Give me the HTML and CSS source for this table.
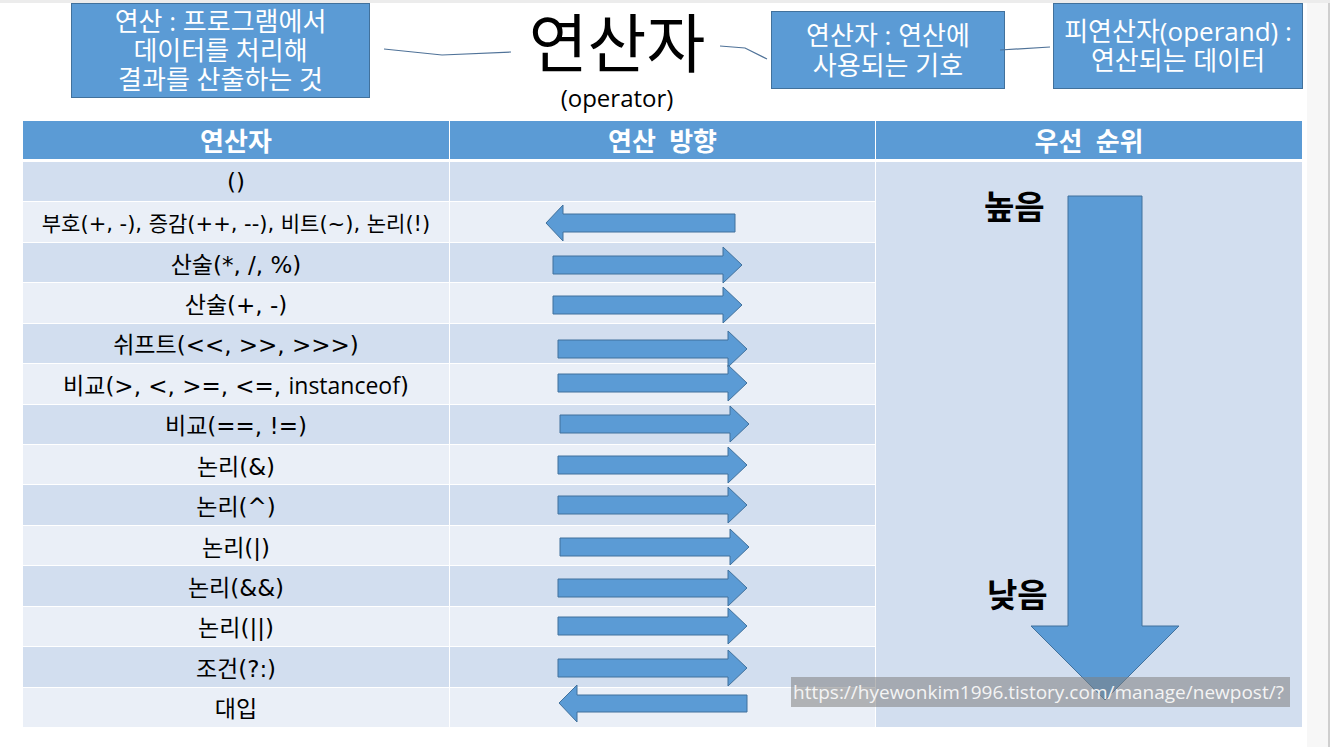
FILE: index.html
```html
<!DOCTYPE html>
<html lang="ko">
<head>
<meta charset="utf-8">
<title>연산자</title>
<link rel="stylesheet" href="styles.css">
</head>
<body>
<div class="page">
  <div class="strip"></div>
  <div class="top">
    <div class="box box1">연산 : 프로그램에서<br>데이터를 처리해<br>결과를 산출하는 것</div>
    <div class="title-block">
      <div class="title">연산자</div>
      <div class="sub">(operator)</div>
    </div>
    <div class="box box2">연산자 : 연산에<br>사용되는 기호</div>
    <div class="box box3">피연산자(operand) :<br>연산되는 데이터</div>
  </div>
  <svg class="connectors" width="1330" height="121" viewBox="0 0 1330 121">
    <polyline points="384,49 442,55 511,52" />
    <polyline points="720,46 745,48 767,59" />
    <polyline points="1000,50 1050,47" />
  </svg>

  <div class="table">
    <div class="thead">
      <div class="th">연산자</div>
      <div class="th">연산 방향</div>
      <div class="th">우선 순위</div>
    </div>
    <div class="tbody">
      <div class="prio">
        <span class="lbl hi">높음</span>
        <span class="lbl lo">낮음</span>
      </div>

      <div class="td b1">()</div><div class="td b1"></div>
      <div class="td b2 small">부호(+, -), 증감(++, --), 비트(~), 논리(!)</div><div class="td b2"></div>
      <div class="td b1">산술(*, /, %)</div><div class="td b1"></div>
      <div class="td b2">산술(+, -)</div><div class="td b2"></div>
      <div class="td b1">쉬프트(&lt;&lt;, &gt;&gt;, &gt;&gt;&gt;)</div><div class="td b1"></div>
      <div class="td b2"><span>비교(&gt;, &lt;, &gt;=, &lt;=, <span class="word">instanceof</span>)</span></div><div class="td b2"></div>
      <div class="td b1">비교(==, !=)</div><div class="td b1"></div>
      <div class="td b2">논리(&amp;)</div><div class="td b2"></div>
      <div class="td b1">논리(^)</div><div class="td b1"></div>
      <div class="td b2">논리(|)</div><div class="td b2"></div>
      <div class="td b1">논리(&amp;&amp;)</div><div class="td b1"></div>
      <div class="td b2">논리(||)</div><div class="td b2"></div>
      <div class="td b1">조건(?:)</div><div class="td b1"></div>
      <div class="td b2">대입</div><div class="td b2"></div>

      <svg class="arrows" width="1279" height="565" viewBox="23 162 1279 565">
        <polygon points="546,223 563,205 563,214 735,214 735,232 563,232 563,241" />
        <polygon points="553,256 723,256 723,247 742,265 723,283 723,274 553,274" />
        <polygon points="553,296 723,296 723,287 742,305 723,323 723,314 553,314" />
        <polygon points="558,340 728,340 728,331 747,349 728,367 728,358 558,358" />
        <polygon points="558,374 728,374 728,365 747,383 728,401 728,392 558,392" />
        <polygon points="560,415 730,415 730,406 749,424 730,442 730,433 560,433" />
        <polygon points="558,456 728,456 728,447 747,465 728,483 728,474 558,474" />
        <polygon points="558,496 728,496 728,487 747,505 728,523 728,514 558,514" />
        <polygon points="560,538 730,538 730,529 749,547 730,565 730,556 560,556" />
        <polygon points="558,579 728,579 728,570 747,588 728,606 728,597 558,597" />
        <polygon points="558,617 728,617 728,608 747,626 728,644 728,635 558,635" />
        <polygon points="558,659 728,659 728,650 747,668 728,686 728,677 558,677" />
        <polygon points="559,703 577,685 577,695 747,695 747,712 577,712 577,722" />
        <polygon points="1068,196 1142,196 1142,626 1179,626 1105,700 1031,626 1068,626" />
      </svg>
    </div>
  </div>

  <div class="watermark">https://hyewonkim1996.tistory.com/manage/newpost/?</div>
</div>
</body>
</html>
```

FILE: styles.css
```css
* { box-sizing: border-box; }

html, body {
  margin: 0;
  padding: 0;
  background: #ffffff;
}

body {
  font-family: "Open Sans", "Noto Sans CJK KR", sans-serif;
  color: #000;
}

.page {
  position: relative;
  width: 1330px;
  height: 747px;
  overflow: hidden;
  background: linear-gradient(to right, #ffffff 0, #ffffff 1307px, #f7f7f7 1307px, #f7f7f7 1328px, #cfcfcf 1328px);
}

.strip {
  height: 3px;
  background: #ececec;
}

/* ---------- top area ---------- */
.top {
  display: flex;
  align-items: flex-start;
  height: 118px;
  padding-left: 71px;
}

.box {
  background: #5b9bd5;
  border: 1px solid #41719c;
  color: #ffffff;
  font-size: 26px;
  line-height: 29px;
  text-align: center;
  display: flex;
  align-items: center;
  justify-content: center;
  white-space: nowrap;
}

.box1 {
  width: 299px;
  height: 95px;
}

.title-block {
  width: 200px;
  margin-left: 147px;
  margin-top: 1px;
  text-align: center;
}

.title {
  font-size: 64px;
  line-height: 78px;
}

.sub {
  font-size: 24px;
  line-height: 28px;
  margin-top: 2px;
}

.box2 {
  width: 234px;
  height: 78px;
  margin-left: 54px;
  margin-top: 8px;
  line-height: 30px;
}

.box3 {
  width: 250px;
  height: 86px;
  margin-left: 48px;
}

.connectors {
  position: absolute;
  left: 0;
  top: 0;
  fill: none;
  stroke: #4f7298;
  stroke-width: 1.2;
}

/* ---------- table ---------- */
.table {
  margin-left: 23px;
  width: 1279px;
}

.thead {
  display: grid;
  grid-template-columns: 426px 425px 426px;
  column-gap: 1px;
  height: 38px;
  margin-bottom: 3px;
}

.th {
  background: #5b9bd5;
  color: #ffffff;
  font-weight: 700;
  font-size: 26px;
  word-spacing: 0.25em;
  display: flex;
  align-items: center;
  justify-content: center;
}

.tbody {
  position: relative;
  display: grid;
  grid-template-columns: 426px 425px 426px;
  grid-template-rows: repeat(14, 1fr);
  column-gap: 1px;
  row-gap: 1px;
  height: 565px;
  background: #ffffff;
}

.td {
  display: flex;
  align-items: center;
  justify-content: center;
  font-family: "DejaVu Sans", "Noto Sans CJK KR", sans-serif;
  font-size: 23px;
  white-space: nowrap;
}

.td.small { font-size: 21px; }

.word { font-family: "Open Sans", sans-serif; }

.b1 { background: #d2deef; }
.b2 { background: #eaeff7; }

.prio {
  position: relative;
  grid-column: 3;
  grid-row: 1 / span 14;
  background: #d2deef;
}

.lbl {
  position: absolute;
  font-weight: 700;
  font-size: 33px;
  line-height: 1;
}

.hi { left: 108px; top: 28px; }
.lo { left: 111px; top: 416px; }

.arrows {
  position: absolute;
  left: 0;
  top: 0;
  fill: #5b9bd5;
  stroke: #41719c;
  stroke-width: 1;
}

/* ---------- watermark ---------- */
.watermark {
  position: absolute;
  left: 791px;
  top: 677px;
  width: 499px;
  height: 30px;
  background: rgba(128, 128, 128, 0.55);
  color: #f4f4f4;
  font-size: 19px;
  line-height: 30px;
  padding-left: 2px;
  white-space: nowrap;
  overflow: hidden;
}
```
